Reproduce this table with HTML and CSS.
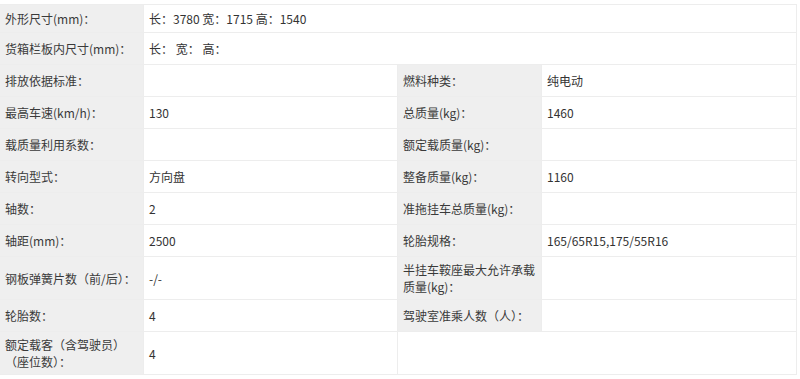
FILE: index.html
```html
<!DOCTYPE html>
<html lang="zh-CN">
<head>
<meta charset="utf-8">
<title>参数</title>
<link rel="stylesheet" href="styles.css">
</head>
<body>
<table class="spec">
  <colgroup>
    <col class="c-label">
    <col class="c-value">
    <col class="c-label">
    <col class="c-value2">
  </colgroup>
  <tr class="first">
    <td class="label">外形尺寸(mm)：</td>
    <td class="value" colspan="3">长：3780 宽：1715 高：1540</td>
  </tr>
  <tr>
    <td class="label">货箱栏板内尺寸(mm)：</td>
    <td class="value" colspan="3">长： 宽： 高：</td>
  </tr>
  <tr>
    <td class="label">排放依据标准：</td>
    <td class="value"></td>
    <td class="label">燃料种类：</td>
    <td class="value">纯电动</td>
  </tr>
  <tr>
    <td class="label">最高车速(km/h)：</td>
    <td class="value">130</td>
    <td class="label">总质量(kg)：</td>
    <td class="value">1460</td>
  </tr>
  <tr>
    <td class="label">载质量利用系数：</td>
    <td class="value"></td>
    <td class="label">额定载质量(kg)：</td>
    <td class="value"></td>
  </tr>
  <tr>
    <td class="label">转向型式：</td>
    <td class="value">方向盘</td>
    <td class="label">整备质量(kg)：</td>
    <td class="value">1160</td>
  </tr>
  <tr>
    <td class="label">轴数：</td>
    <td class="value">2</td>
    <td class="label">准拖挂车总质量(kg)：</td>
    <td class="value"></td>
  </tr>
  <tr>
    <td class="label">轴距(mm)：</td>
    <td class="value">2500</td>
    <td class="label">轮胎规格：</td>
    <td class="value">165/65R15,175/55R16</td>
  </tr>
  <tr>
    <td class="label">钢板弹簧片数（前/后）：</td>
    <td class="value">-/-</td>
    <td class="label">半挂车鞍座最大允许承载质量(kg)：</td>
    <td class="value"></td>
  </tr>
  <tr>
    <td class="label">轮胎数：</td>
    <td class="value">4</td>
    <td class="label">驾驶室准乘人数（人）：</td>
    <td class="value"></td>
  </tr>
  <tr>
    <td class="label">额定载客（含驾驶员）<br>（座位数）：</td>
    <td class="value">4</td>
    <td class="value" colspan="2"></td>
  </tr>
</table>
</body>
</html>
```
FILE: styles.css
```css
html, body {
  margin: 0;
  padding: 0;
  background: #ffffff;
}

body {
  padding-top: 4px;
  font-family: "Noto Sans CJK SC", "Noto Sans", sans-serif;
  font-size: 12px;
  color: #333333;
}

.spec {
  border-collapse: collapse;
  table-layout: fixed;
  width: 797px;
  margin-left: -1px;
}

.c-label { width: 144px; }
.c-value { width: 254px; }
.c-value2 { width: 255px; }

.spec td {
  border: 1px solid #ededed;
  padding: 4px 0 4px 5px;
  height: 23px;
  line-height: 17px;
  vertical-align: middle;
}

.spec tr.first td {
  height: 20px;
  padding-top: 3px;
}

.spec .label {
  background: #efefef;
  color: #3a3a3a;
}

.spec .value {
  background: #ffffff;
  color: #333333;
}
```
